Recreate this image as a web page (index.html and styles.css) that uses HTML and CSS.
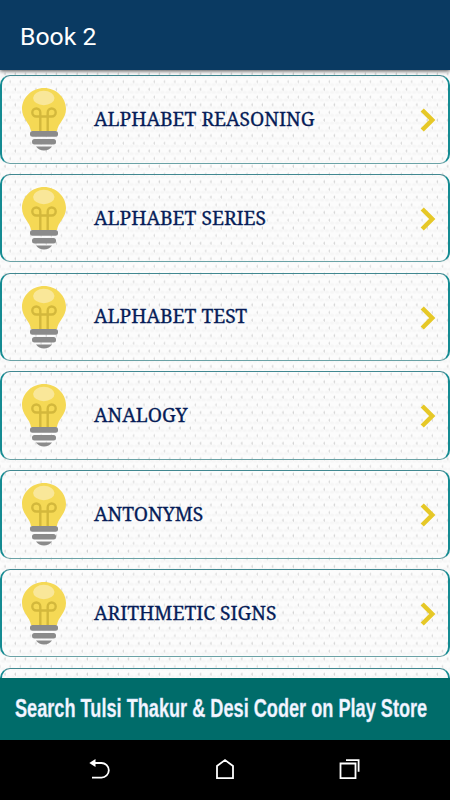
FILE: index.html
```html
<!DOCTYPE html>
<html lang="en">
<head>
<meta charset="utf-8">
<title>Book 2</title>
<link rel="stylesheet" href="styles.css">
</head>
<body>
<svg class="defs" aria-hidden="true">
  <symbol id="bulb" viewBox="0 0 44 64">
    <path d="M22 0C10 0 0 9.500 0 21c0 10 8 14 9 22h26c1-8 9-12 9-22C44 9.500 34 0 22 0z" fill="#f5d955"/>
    <ellipse cx="21.800" cy="10" rx="10.700" ry="7.200" fill="#f9e799"/>
    <path d="M18.300 43V24.500a4 4 0 1 0-4 4H29.700a4 4 0 1 0-4-4V43" fill="none" stroke="#d3b83c" stroke-width="2.400"/>
    <rect x="8" y="43" width="28" height="5.800" rx="2.500" fill="#8b8b8b"/>
    <rect x="10" y="51" width="24" height="5.500" rx="2.500" fill="#8b8b8b"/>
    <path d="M14 58.500h16c-2 2.500-4.500 4-8 4s-6-1.500-8-4z" fill="#8b8b8b"/>
  </symbol>
  <symbol id="chevron" viewBox="0 0 16 24">
    <path d="M2.200 2l10 10L2.200 22" fill="none" stroke="#e6c827" stroke-width="4.500"/>
  </symbol>
</svg>
<div class="screen">
  <header class="bar">Book 2</header>
  <main class="list">
    <div class="card"><svg class="bulb"><use href="#bulb"/></svg><span class="label">ALPHABET REASONING</span><svg class="chevron"><use href="#chevron"/></svg></div>
    <div class="card"><svg class="bulb"><use href="#bulb"/></svg><span class="label">ALPHABET SERIES</span><svg class="chevron"><use href="#chevron"/></svg></div>
    <div class="card"><svg class="bulb"><use href="#bulb"/></svg><span class="label">ALPHABET TEST</span><svg class="chevron"><use href="#chevron"/></svg></div>
    <div class="card"><svg class="bulb"><use href="#bulb"/></svg><span class="label">ANALOGY</span><svg class="chevron"><use href="#chevron"/></svg></div>
    <div class="card"><svg class="bulb"><use href="#bulb"/></svg><span class="label">ANTONYMS</span><svg class="chevron"><use href="#chevron"/></svg></div>
    <div class="card"><svg class="bulb"><use href="#bulb"/></svg><span class="label">ARITHMETIC SIGNS</span><svg class="chevron"><use href="#chevron"/></svg></div>
    <div class="card"></div>
  </main>
  <footer class="banner">
    <span class="banner-text">Search Tulsi Thakur &amp; Desi Coder on Play Store</span>
  </footer>
  <nav class="nav">
    <svg viewBox="0 0 24 24"><path d="M5 6h8.500a7.200 7.200 0 0 1 0 14.600H4" transform="translate(0 -1)"/><path class="solid" d="M1.300 5L7.500 1v8z"/></svg>
    <svg viewBox="0 0 24 24"><path d="M4 20.200V8l8-6 8 6v12.200z"/></svg>
    <svg viewBox="0 0 24 24"><path d="M2.500 5.500h15v14.700h-15zM8 2.200h12.600v11.600"/></svg>
  </nav>
</div>
</body>
</html>
```
FILE: styles.css
```css
* { box-sizing: border-box; }
body { margin: 0; }
.defs { display: none; }
.screen {
  width: 450px;
  height: 800px;
  display: flex;
  flex-direction: column;
  overflow: hidden;
}
.bar {
  flex: 0 0 70px;
  padding: 2px 20px 0;
  background: #0a3a62;
  color: #fff;
  font: 24.8px/70px Roboto, sans-serif;
  height: 70px;
  min-height: 0;
  box-shadow: 0 1px 4px rgba(0, 0, 0, .7);
  z-index: 1;
}
.list {
  flex: 0 0 608px;
  padding-top: 5px;
  overflow: hidden;
  display: flex;
  flex-direction: column;
  gap: 10.3px;
  background-color: #fcfcfc;
  background-image:
    radial-gradient(ellipse 1px 2px at 5px 4px, #d3d3d3 0 50%, transparent 100%),
    radial-gradient(ellipse 1px 2px at 5px 4px, #dbdbdb 0 50%, transparent 100%),
    radial-gradient(ellipse 3px 2px at 3px 4px, #f6f6f6 0 50%, transparent 100%);
  background-size: 10.3px 15.4px, 10.3px 15.4px, 5.15px 7.7px;
  background-position: 0 0, 5.15px 7.7px, 0 3px;
}
.card {
  flex: 0 0 88.5px;
  display: flex;
  align-items: center;
  padding: 1.6px 12px 0 20px;
  border: 1px solid #4b8d96;
  border-width: 1px 2px;
  border-color: #418891 #148b92 #6aa2a6;
  border-radius: 10px;
}
.bulb { width: 44px; height: 64px; flex: none; }
.label {
  flex: 1;
  margin: -2.4px 0 0 28px;
  color: #061d58;
  font: 19.25px/24px "Noto Serif", "Droid Serif", "Liberation Serif", serif;
  -webkit-text-stroke: .3px #061d58;
  white-space: nowrap;
}
.chevron { width: 16px; height: 24px; flex: none; }
.banner {
  flex: 0 0 62px;
  padding-left: 15px;
  background: #006c6a;
}
.banner-text {
  display: inline-block;
  color: #f4f8ff;
  font: bold 25px/60px "Liberation Sans", sans-serif;
  -webkit-text-stroke: .4px #c4d6f0;
  white-space: nowrap;
  transform: scaleX(.726);
  transform-origin: 0 50%;
}
.nav {
  flex: 1;
  display: flex;
  justify-content: center;
  gap: 101px;
  padding-top: 18px;
  background: #000;
}
.nav svg { width: 24px; height: 24px; fill: none; stroke: #fff; stroke-width: 1.8; }
.nav .solid { fill: #fff; stroke: none; }
```
